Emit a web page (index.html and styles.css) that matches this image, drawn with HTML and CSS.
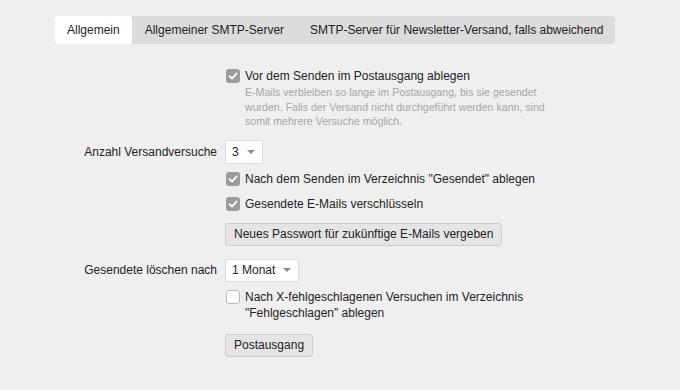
FILE: index.html
```html
<!DOCTYPE html>
<html lang="de">
<head>
<meta charset="utf-8">
<title>Einstellungen</title>
<link rel="stylesheet" href="styles.css">
</head>
<body>
<div class="page">
  <nav class="tabs">
    <div class="tab active">Allgemein</div>
    <div class="tab">Allgemeiner SMTP-Server</div>
    <div class="tab">SMTP-Server für Newsletter-Versand, falls abweichend</div>
  </nav>

  <div class="form">
    <div class="row r-first">
      <div class="label"></div>
      <div class="control">
        <div class="check">
          <span class="box checked"><svg viewBox="0 0 14 14" width="14" height="14"><path d="M3.5 7.2 L6 9.6 L10.6 4.4" fill="none" stroke="#fff" stroke-width="1.8" stroke-linecap="round" stroke-linejoin="round"/></svg></span>
          <span class="check-text">Vor dem Senden im Postausgang ablegen</span>
        </div>
        <p class="desc">E-Mails verbleiben so lange im Postausgang, bis sie gesendet<br>wurden. Falls der Versand nicht durchgeführt werden kann, sind<br>somit mehrere Versuche möglich.</p>
      </div>
    </div>

    <div class="row r-select1">
      <div class="label">Anzahl Versandversuche</div>
      <div class="control">
        <div class="select"><span>3</span><span class="caret"></span></div>
      </div>
    </div>

    <div class="row r-check2">
      <div class="label"></div>
      <div class="control">
        <div class="check">
          <span class="box checked"><svg viewBox="0 0 14 14" width="14" height="14"><path d="M3.5 7.2 L6 9.6 L10.6 4.4" fill="none" stroke="#fff" stroke-width="1.8" stroke-linecap="round" stroke-linejoin="round"/></svg></span>
          <span class="check-text">Nach dem Senden im Verzeichnis "Gesendet" ablegen</span>
        </div>
      </div>
    </div>

    <div class="row r-check3">
      <div class="label"></div>
      <div class="control">
        <div class="check">
          <span class="box checked"><svg viewBox="0 0 14 14" width="14" height="14"><path d="M3.5 7.2 L6 9.6 L10.6 4.4" fill="none" stroke="#fff" stroke-width="1.8" stroke-linecap="round" stroke-linejoin="round"/></svg></span>
          <span class="check-text">Gesendete E-Mails verschlüsseln</span>
        </div>
      </div>
    </div>

    <div class="row r-button1">
      <div class="label"></div>
      <div class="control">
        <button class="btn" type="button">Neues Passwort für zukünftige E-Mails vergeben</button>
      </div>
    </div>

    <div class="row r-select2">
      <div class="label">Gesendete löschen nach</div>
      <div class="control">
        <div class="select small"><span>1 Monat</span><span class="caret"></span></div>
      </div>
    </div>

    <div class="row r-check4">
      <div class="label"></div>
      <div class="control">
        <div class="check">
          <span class="box"></span>
          <span class="check-text">Nach X-fehlgeschlagenen Versuchen im Verzeichnis "Fehlgeschlagen" ablegen</span>
        </div>
      </div>
    </div>

    <div class="row r-button2">
      <div class="label"></div>
      <div class="control">
        <button class="btn" type="button">Postausgang</button>
      </div>
    </div>
  </div>
</div>
</body>
</html>
```

FILE: styles.css
```css
* { box-sizing: border-box; }

html, body {
  margin: 0;
  padding: 0;
  background: #efefef;
}

body {
  font-family: "Liberation Sans", Arial, Helvetica, sans-serif;
  font-size: 12px;
  color: #222;
  width: 680px;
  height: 390px;
  overflow: hidden;
}

.page {
  padding: 16px 0 0 55px;
}

/* Tabs */
.tabs {
  display: flex;
  width: 560px;
  height: 28px;
  background: #dcdcdc;
  border-radius: 3px;
}

.tab {
  display: flex;
  align-items: center;
  padding: 0 13px;
  color: #1e1e1e;
  white-space: nowrap;
}

.tab.active {
  background: #fff;
  border-radius: 3px;
  padding: 0 12px;
}

/* Form */
.form {
  display: flex;
  flex-direction: column;
}

.row {
  display: flex;
  align-items: center;
}

.label {
  width: 162px;
  flex: none;
  text-align: right;
  color: #222;
}

.control {
  margin-left: 8px;
  width: 315px;
}

.r-first   { margin-top: 24px; align-items: flex-start; }
.r-select1 { margin-top: 11px; }
.r-check2  { margin-top: 7px; }
.r-check3  { margin-top: 9px; }
.r-button1 { margin-top: 11px; }
.r-select2 { margin-top: 13px; }
.r-check4  { margin-top: 7px; align-items: flex-start; }
.r-button2 { margin-top: 13px; }

/* Checkbox */
.check {
  display: flex;
  align-items: flex-start;
  line-height: 16px;
}

.box {
  flex: none;
  width: 14px;
  height: 14px;
  margin: 1px 5px 0 1px;
  border-radius: 3px;
  background: #fff;
  border: 1px solid #b9b9b9;
  display: flex;
}

.box.checked {
  background: #9b9b9b;
  border: none;
}

.box svg { display: block; }

.check-text {
  color: #222;
}

.desc {
  margin: 1px 0 0 20px;
  font-size: 10.6px;
  line-height: 14.5px;
  color: #a6a6a6;
  white-space: nowrap;
}

/* Select */
.select {
  display: inline-flex;
  align-items: center;
  height: 24px;
  padding: 0 7px 0 6px;
  background: #fff;
  border: 1px solid #dedede;
  color: #222;
}

.select.small {
  height: 23px;
}

.caret {
  width: 0;
  height: 0;
  margin-left: 8px;
  border-left: 4px solid transparent;
  border-right: 4px solid transparent;
  border-top: 4px solid #8a8a8a;
}

/* Buttons */
.btn {
  font-family: inherit;
  font-size: 12px;
  color: #222;
  height: 23px;
  padding: 0 8px;
  background: #e5e5e5;
  border: 1px solid #cdcdcd;
  border-radius: 3px;
}
```
